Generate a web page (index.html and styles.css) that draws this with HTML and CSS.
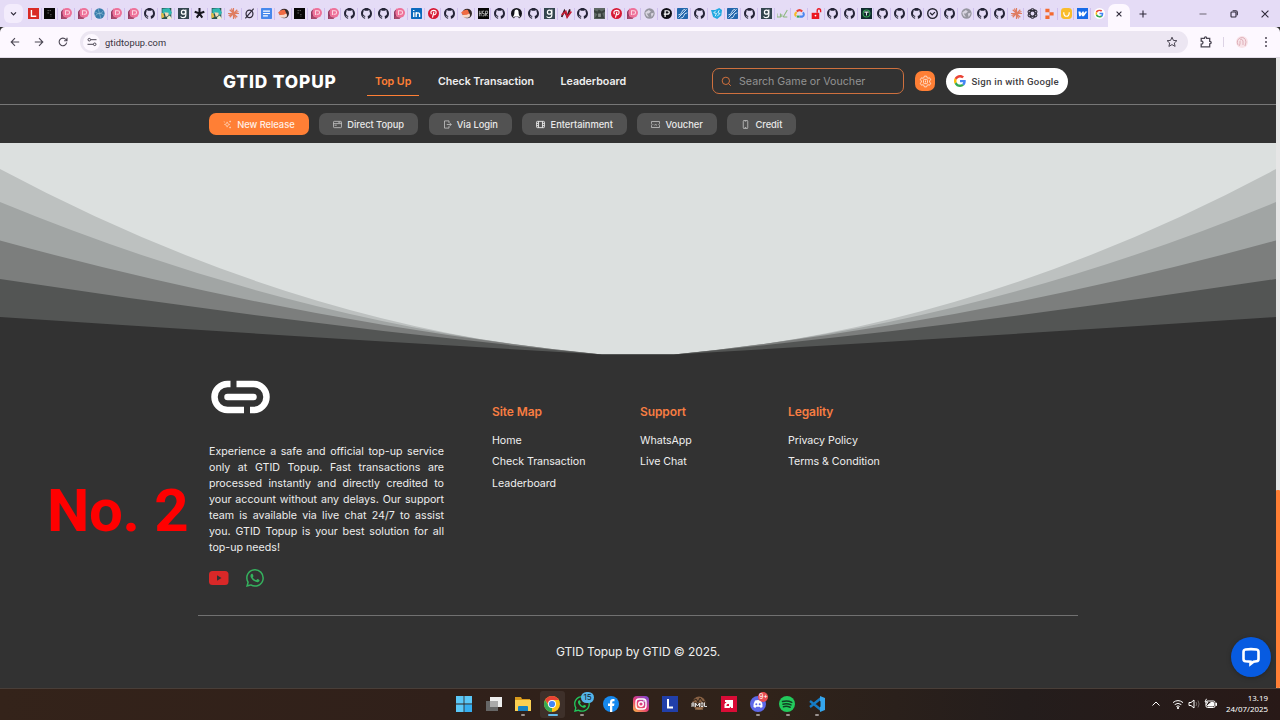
FILE: index.html
```html
<!DOCTYPE html>
<html lang="en">
<head>
<meta charset="utf-8">
<title>GTID Topup</title>
<link rel="stylesheet" href="styles.css">
</head>
<body>
<svg class="defs" aria-hidden="true">
  <symbol id="gh" viewBox="0 0 16 16"><path fill="#252437" d="M8 0C3.58 0 0 3.58 0 8c0 3.54 2.29 6.53 5.47 7.59.4.07.55-.17.55-.38 0-.19-.01-.82-.01-1.49-2.01.37-2.53-.49-2.69-.94-.09-.23-.48-.94-.82-1.13-.28-.15-.68-.52-.01-.53.63-.01 1.08.58 1.23.82.72 1.21 1.87.87 2.33.66.07-.52.28-.87.51-1.07-1.78-.2-3.64-.89-3.64-3.95 0-.87.31-1.59.82-2.15-.08-.2-.36-1.02.08-2.12 0 0 .67-.21 2.2.82.64-.18 1.32-.27 2-.27s1.36.09 2 .27c1.53-1.04 2.2-.82 2.2-.82.44 1.1.16 1.92.08 2.12.51.56.82 1.27.82 2.15 0 3.07-1.87 3.75-3.65 3.95.29.25.54.73.54 1.48 0 1.07-.01 1.93-.01 2.2 0 .21.15.46.55.38A8.01 8.01 0 0 0 16 8c0-4.42-3.58-8-8-8z"/></symbol>
  <symbol id="red-l" viewBox="0 0 16 16"><path fill="#d92b25" d="M0 0h16v16H0z"/><path fill="none" stroke="#fff" stroke-width="2" d="M5 3v9h7"/></symbol>
  <symbol id="dots" viewBox="0 0 16 16"><path fill="#060606" d="M0 0h16v16H0z"/><path stroke="#999" stroke-width="1.3" stroke-dasharray="1.5 2" d="M6 3v5M9 3v3M10 9v4"/></symbol>
  <symbol id="pink" viewBox="0 0 16 16"><path fill="#913b62" d="M0 5l4-4v15H0z"/><path fill="#a9496d" d="M1 12h10l-3 4H1z"/><circle cx="9" cy="7" r="7" fill="#ee7199"/><path fill="#ee7199" d="M3 1h5v11H3z"/><path fill="none" stroke="#fbd6e2" stroke-width="1.500" d="M6.500 10V4h3.500q2.500 0 2.500 2.500T10 9H8"/></symbol>
  <symbol id="planet" viewBox="0 0 16 16"><circle cx="8" cy="8" r="7.5" fill="#397dac"/><path fill="none" stroke="#92bdd5" d="M2 6q6 5 12-2M2 11q6-6 12-1M6 1l4 14"/></symbol>
  <symbol id="anime" viewBox="0 0 16 16"><path fill="#2b534e" d="M1 0h14v16H1z"/><path fill="#31b8b2" d="M2 1l10-1 4 7-3 4-6-5-5 5z"/><path fill="#f2d7ba" d="M5 6l6 1v4l-4 2z"/><path fill="#dfbd46" d="M0 8l3-1 2 6-4 2z"/><path fill="#f1f0d0" d="M9 13l4-2 3 5H9z"/></symbol>
  <symbol id="good" viewBox="0 0 16 16"><path fill="#34464f" d="M0 0h16v16H0z"/><circle cx="8" cy="6" r="3" fill="none" stroke="#fff" stroke-width="1.8"/><path fill="none" stroke="#fff" stroke-width="1.7" d="M11.4 2v8q0 4-4 4-3 0-3.400-2"/></symbol>
  <symbol id="aster" viewBox="0 0 16 16"><path fill="none" stroke="#16151d" stroke-width="3" d="M8 0v8M1 5.500l7 2.500 7-2.500M4 14l4-6 4 6"/></symbol>
  <symbol id="claude" viewBox="0 0 16 16"><path fill="none" stroke="#df7d62" stroke-width="1.700" d="M8 0v16M0 8h16M2.500 2.500l11 11M13.500 2.500l-11 11M5 .8l6 14.400M.8 11l14.400-6"/></symbol>
  <symbol id="oslash" viewBox="0 0 16 16"><ellipse cx="8" cy="8.500" rx="5" ry="5.500" fill="none" stroke="#302b3a" stroke-width="1.8"/><path stroke="#302b3a" stroke-width="1.7" d="M2 15L14 1"/></symbol>
  <symbol id="docs" viewBox="0 0 16 16"><rect width="16" height="16" rx="1" fill="#4688ec"/><path stroke="#fff" stroke-width="1.7" d="M3 4.500h10M3 8h10M3 11.500h7"/></symbol>
  <symbol id="bird" viewBox="0 0 16 16"><circle cx="9" cy="8" r="7" fill="#332a2b"/><path fill="#f06b43" d="M0 7q5-6 10-4l3 7-8 2z"/><path fill="#f6d9cc" d="M1 10q7 1 11-2 3 5-2 6-7 1-9-4z"/></symbol>
  <symbol id="linkedin" viewBox="0 0 16 16"><rect width="16" height="16" rx="1" fill="#0b69bd"/><path fill="none" stroke="#fff" stroke-width="2" d="M4 6v7M4 3v1.500M7.500 13V6m0 4q0-3 2.600-3T12.500 10v3"/></symbol>
  <symbol id="pin" viewBox="0 0 16 16"><circle cx="8" cy="8" r="8" fill="#d71934"/><path fill="none" stroke="#fff" stroke-width="1.7" d="M5 9Q2.500 4 8 3.500 13 3.500 11.500 8 10 11 7.500 9M8.500 6L6.500 14"/></symbol>
  <symbol id="hsr" viewBox="0 0 16 16"><path fill="#050505" d="M0 0h16v16H0z"/><path fill="none" stroke="#ddd" d="M2 4v8M2 8h2.500M4.500 4v8M9 4.500H6.500V8H9v3.500H6.500M11 12V4.500h3V8h-3l3 4"/></symbol>
  <symbol id="oval" viewBox="0 0 16 16"><circle cx="8" cy="8" r="8" fill="#13131b"/><path fill="#fff" d="M5 6q0-4 3-4t3 4q0 3 1 5l2 4q-2-3-6-3t-6 3l2-4Q5 9 5 6z"/><path fill="#e5dcf6" d="M4 16q1-4 4-4t4 4z"/></symbol>
  <symbol id="rn" viewBox="0 0 16 16"><path fill="none" stroke="#341821" stroke-width="2.600" d="M1 13L5 4l4 8 4-10"/><path fill="none" stroke="#c81c34" stroke-width="2.500" d="M1 10l6-5 2 8 6-8"/></symbol>
  <symbol id="photo" viewBox="0 0 16 16"><path fill="#5e6864" d="M0 0h16v16H0z"/><path fill="#39413e" d="M0 3l5 2 2-3 4 3 5-3v3l-4 3 3 7H1l4-6-5-3z"/><path fill="#8b928e" d="M6 8h4v5H6z"/></symbol>
  <symbol id="globe" viewBox="0 0 16 16"><circle cx="8" cy="8" r="7.500" fill="#9696a0"/><path fill="#d9d5e1" d="M2 6l5-3 3 2-3 3H4l3 5q-5-1-5-7zm8 2l4-1q0 4-3 6z"/></symbol>
  <symbol id="pblack" viewBox="0 0 16 16"><circle cx="8" cy="8" r="8" fill="#111018"/><path fill="none" stroke="#fff" stroke-width="1.800" d="M6 13V4h3q3 0 3 2.500T9 9H4"/></symbol>
  <symbol id="waves" viewBox="0 0 16 16"><rect width="16" height="16" rx="1" fill="#2267ac"/><path fill="none" stroke="#dbecfa" stroke-width="1.300" d="M2 14L14 2M2 10q4 0 5-4t5-4M5 15q5-1 5-4t5-4"/></symbol>
  <symbol id="cyan" viewBox="0 0 16 16"><path fill="#21a9e1" d="M0 3l6 0 6-3 4 3-1 8-6 5-6-3z"/><path fill="none" stroke="#e8f8ff" stroke-width="1.300" d="M7 4L4 7l4 1-2 4M12 3l-2 4 3 1-4 4"/></symbol>
  <symbol id="line" viewBox="0 0 16 16"><path fill="none" stroke="#8bb77d" stroke-width="1.500" d="M0 8v5h5V8m2 5V9m2 4l6-10M9 13h6"/></symbol>
  <symbol id="cloud" viewBox="0 0 16 16"><path fill="none" stroke="#4c86ef" stroke-width="3" d="M8 12.500h4q4-2 1-6"/><path fill="none" stroke="#ea4335" stroke-width="3" d="M4 5q4-4 8 0"/><path fill="none" stroke="#f9ba25" stroke-width="3" d="M4 6q-4 3-1 6"/><path stroke="#38a858" stroke-width="3" d="M4 12.500h4"/></symbol>
  <symbol id="lock" viewBox="0 0 16 16"><path fill="#eb1721" d="M1 7h11v9H1z"/><path fill="none" stroke="#eb1721" stroke-width="2" d="M9 7V4q0-3 2.500-3T14 4v2"/><circle cx="6.500" cy="11" r="1.300" fill="#fff"/></symbol>
  <symbol id="tgreen" viewBox="0 0 16 16"><path fill="#102b30" d="M0 0h16v16H0z"/><circle cx="8" cy="8" r="5" fill="none" stroke="#36a956" stroke-width="1.500"/><path stroke="#dfeee7" stroke-width="1.500" d="M5 6h6M8 6v5"/></symbol>
  <symbol id="check" viewBox="0 0 16 16"><circle cx="8" cy="8" r="7" fill="none" stroke="#252431" stroke-width="2"/><path fill="none" stroke="#252431" stroke-width="1.800" d="M4.500 7l3 3 4-4"/></symbol>
  <symbol id="gpt" viewBox="0 0 16 16"><g fill="none" stroke="#2b2934" stroke-width="1.500"><ellipse cx="8" cy="8" rx="3.500" ry="7"/><ellipse cx="8" cy="8" rx="3.500" ry="7" transform="rotate(60 8 8)"/><ellipse cx="8" cy="8" rx="3.500" ry="7" transform="rotate(120 8 8)"/></g></symbol>
  <symbol id="replit" viewBox="0 0 16 16"><path fill="#f4692f" d="M2 1h6v5H2zM8 6h6v5H8zM2 11h6v5H2z"/></symbol>
  <symbol id="yellow" viewBox="0 0 16 16"><rect width="16" height="16" rx="5" fill="#f9bc2b"/><path fill="none" stroke="#fff" stroke-width="1.800" d="M4 6q0 6 4 6t4-6"/></symbol>
  <symbol id="webflow" viewBox="0 0 16 16"><path fill="#176be8" d="M0 0h16v16H0z"/><path fill="#fff" d="M2 5h3l1 3 2-3h2v3l2-3h3l-5 7H7V9l-2 3H3z"/></symbol>
  <symbol id="google" viewBox="0 0 48 48"><path fill="#EA4335" d="M24 9.500c3.540 0 6.710 1.220 9.210 3.600l6.850-6.850C35.900 2.380 30.470 0 24 0 14.620 0 6.510 5.380 2.560 13.220l7.980 6.190C12.430 13.720 17.740 9.500 24 9.500z"/><path fill="#4285F4" d="M46.980 24.550c0-1.570-.15-3.090-.38-4.550H24v9.020h12.940c-.58 2.960-2.260 5.480-4.780 7.180l7.730 6c4.510-4.180 7.090-10.360 7.090-17.650z"/><path fill="#FBBC05" d="M10.530 28.590c-.48-1.450-.76-2.990-.76-4.590s.27-3.140.76-4.590l-7.980-6.190C.92 16.460 0 20.120 0 24s.92 7.540 2.560 10.780l7.970-6.190z"/><path fill="#34A853" d="M24 48c6.480 0 11.930-2.130 15.890-5.810l-7.730-6c-2.150 1.450-4.920 2.300-8.160 2.300-6.260 0-11.570-4.220-13.470-9.910l-7.980 6.190C6.510 42.620 14.620 48 24 48z"/></symbol>
  <symbol id="gtab" viewBox="0 0 16 16"><circle cx="8" cy="8" r="8" fill="#fff"/><use href="#google" x="2" y="2" width="12" height="12"/></symbol>
  <symbol id="wa" viewBox="0 0 16 16"><path fill="currentColor" d="M13.601 2.326A7.854 7.854 0 0 0 7.994 0C3.627 0 .068 3.558.064 7.926c0 1.399.366 2.760 1.057 3.965L0 16l4.204-1.102a7.933 7.933 0 0 0 3.790.965h.004c4.368 0 7.926-3.558 7.930-7.930A7.898 7.898 0 0 0 13.600 2.326zM7.994 14.521a6.573 6.573 0 0 1-3.356-.920l-.240-.144-2.494.654.666-2.433-.156-.251a6.560 6.560 0 0 1-1.007-3.505c0-3.626 2.957-6.584 6.591-6.584a6.560 6.560 0 0 1 4.660 1.931 6.557 6.557 0 0 1 1.928 4.660c-.004 3.639-2.961 6.592-6.592 6.592zm3.615-4.934c-.197-.099-1.170-.578-1.353-.646-.182-.065-.315-.099-.445.099-.133.197-.513.646-.627.775-.114.133-.232.148-.430.050-.197-.100-.836-.308-1.592-.985-.590-.525-.985-1.175-1.103-1.372-.114-.198-.011-.304.088-.403.087-.088.197-.232.296-.346.100-.114.133-.198.198-.330.065-.134.034-.248-.015-.347-.050-.099-.445-1.076-.612-1.470-.160-.389-.323-.335-.445-.340-.114-.007-.247-.007-.380-.007a.729.729 0 0 0-.529.247c-.182.198-.691.677-.691 1.654 0 .977.710 1.916.810 2.049.098.133 1.394 2.132 3.383 2.992.470.205.840.326 1.129.418.475.152.904.129 1.246.080.380-.058 1.171-.480 1.338-.943.164-.464.164-.860.114-.943-.049-.084-.182-.133-.380-.232z"/></symbol>
</svg>

<div class="tabstrip">
  <div class="tab-search"><svg viewBox="0 0 8 8"><path d="M1.800 3L4 5.200 6.200 3"/></svg></div>
  <div class="tabs" id="tabs"></div>
  <div class="active-tab"><svg viewBox="0 0 8 8"><path d="M1.600 1.600l4.800 4.800M6.400 1.600L1.600 6.400"/></svg></div>
  <svg class="new-tab" viewBox="0 0 8 8"><path d="M4 .5v7M.5 4h7"/></svg>
  <div class="window-buttons">
    <svg viewBox="0 0 8 8"><path d="M.5 4h7"/></svg>
    <svg viewBox="0 0 8 8"><rect x="1" y="2" width="5" height="5" rx=".8"/><path d="M2.600.8h3.200q1.500 0 1.500 1.500v3"/></svg>
    <svg viewBox="0 0 8 8"><path d="M.6.6l6.800 6.800M7.400.6L.6 7.400"/></svg>
  </div>
</div>
<div class="toolbar">
  <svg class="nav-icon" viewBox="0 0 10 10"><path d="M9.200 5H1.200M5 1.200L1.200 5 5 8.800"/></svg>
  <svg class="nav-icon" viewBox="0 0 10 10"><path d="M.8 5h8M5 1.200L8.800 5 5 8.800"/></svg>
  <svg class="nav-icon" viewBox="0 0 10 10"><path d="M8.700 5.500A3.800 3.800 0 1 1 7.900 2.500L9 3.600M9 .8v2.900H6.100"/></svg>
  <div class="address">
    <span class="site-info"><svg viewBox="0 0 10 10"><path d="M3.800 2.700H9.500M.5 7.300h5.700"/><circle cx="2.300" cy="2.700" r="1.300"/><circle cx="7.700" cy="7.300" r="1.300"/></svg></span>
    <span class="url">gtidtopup.com</span>
    <svg class="star" viewBox="0 0 12 12"><path d="M6 1.200l1.400 3.200 3.500.3-2.600 2.300.8 3.400L6 8.600l-3.100 1.800.8-3.400L1.100 4.700l3.500-.3z"/></svg>
  </div>
  <svg class="puzzle" viewBox="0 0 12 12"><path d="M1.200 2.300h3.300q0-1.500 1.100-1.500t1.100 1.500h3v3.100q1.500 0 1.500 1.200T9.700 7.800v3.100H1.200V8.200Q3 8.200 3 6.600T1.200 5z"/></svg>
  <span class="divider"></span>
  <svg class="avatar" viewBox="0 0 12 12"><circle cx="6" cy="6" r="6" fill="#f8e3e8"/><path fill="none" stroke="#d8a2ad" stroke-width=".8" d="M2 9Q0 4 4 2q5-2 6 4l-1 4M4 4q2-2 3 1v4M4 5v3l-1 2"/></svg>
  <svg class="kebab" viewBox="0 0 4 12"><circle cx="2" cy="2" r="1"/><circle cx="2" cy="6" r="1"/><circle cx="2" cy="10" r="1"/></svg>
</div>

<main class="viewport">
  <div class="site">
    <header class="header">
      <div class="brand">GTID TOPUP</div>
      <nav class="menu"><a class="current">Top Up</a><a>Check Transaction</a><a>Leaderboard</a></nav>
      <div class="search"><svg viewBox="0 0 12 12"><circle cx="5.300" cy="5.300" r="4"/><path d="M8.300 8.300l2.400 2.400"/></svg><span>Search Game or Voucher</span></div>
      <div class="settings"><svg viewBox="0 0 14 14"><path d="M5.800 1.200h2.400l.5 1.700 1 .6 1.700-.5 1.200 2.100L11.400 6.400v1.200l1.200 1.300-1.200 2.100-1.700-.5-1 .6-.5 1.700H5.800l-.5-1.700-1-.6-1.700.5-1.200-2.100 1.200-1.300V6.400L1.400 5.100 2.600 3l1.700.5 1-.6z"/><rect x="4.900" y="4.700" width="4.200" height="4.600" rx="1"/><path d="M7 6v2"/></svg></div>
      <div class="signin"><svg><use href="#google"/></svg><span>Sign in with Google</span></div>
    </header>
    <div class="categories">
      <div class="chip hot"><svg viewBox="0 0 12 12"><path d="M5.500 2.500l1 2.500L9 6 6.500 7l-1 2.500-1-2.500L2 6l2.500-1zM9.500.8v2.400M8.300 2h2.400M9.500 8.800v2.400M8.300 10h2.400M1 2l1.500 1"/></svg>New Release</div>
      <div class="chip"><svg viewBox="0 0 12 12"><rect x=".7" y="1.800" width="10.600" height="8.400" rx="1"/><path d="M.7 4.800h10.600M7 3h3M2 7h3"/></svg>Direct Topup</div>
      <div class="chip login"><svg viewBox="0 0 12 12"><path d="M8 4V1.200H2v9.600h6V8M5 6h6M9 4l2 2-2 2"/></svg>Via Login</div>
      <div class="chip film"><svg viewBox="0 0 12 12"><rect x=".8" y="1.800" width="10.400" height="8.400" rx="1"/><path d="M3.400 1.800v8.400M8.600 1.800v8.400M1 4.500h2.400M1 7.500h2.400M8.600 4.500H11M8.600 7.500H11"/></svg>Entertainment</div>
      <div class="chip"><svg viewBox="0 0 12 12"><path d="M.7 2h10.600v2.800q-1.500 1.200 0 2.400V10H.7V7.200q1.500-1.200 0-2.400zM4 6l1 1 1-1 2 1"/></svg>Voucher</div>
      <div class="chip"><svg viewBox="0 0 12 12"><rect x="3" y=".6" width="6" height="10.800" rx="1"/><path d="M5 1.500h2M5 10h2"/></svg>Credit</div>
    </div>
    <svg class="curves" viewBox="0 0 1276 212" preserveAspectRatio="none">
      <path fill="#dce0df" d="M0 0h1276v212H0z"/>
      <path fill="#bdc1c0" d="M0 26Q302 187 602 211.500H674Q974 187 1276 26V212H0z"/>
      <path fill="#a1a5a4" d="M0 59Q301 183 602 211.500H674Q975 183 1276 59V212H0z"/>
      <path fill="#7c7e7d" d="M0 97.500Q301 180 602 211.500H674Q975 180 1276 97.500V212H0z"/>
      <path fill="#535554" d="M0 136Q301 182 602 211.500H674Q975 182 1276 136V212H0z"/>
      <path fill="#323232" d="M0 174Q301 194 602 211.500H674Q975 194 1276 174V212H0z"/>
    </svg>
    <footer class="footer">
      <div class="columns">
        <section class="about">
          <svg class="chain" viewBox="0 0 60 34"><path fill="none" stroke="#fff" stroke-width="6.500" d="M19.500 4H16.500A13 13 0 0 0 16.500 30H33M25.500 4H42.500A13 13 0 0 1 42.500 30H39"/><path stroke="#fff" stroke-width="6.500" stroke-linecap="round" d="M16.500 17h26"/></svg>
          <p>Experience a safe and official top-up service only at GTID Topup. Fast transactions are processed instantly and directly credited to your account without any delays. Our support team is available via live chat 24/7 to assist you. GTID Topup is your best solution for all top-up needs!</p>
          <div class="social">
            <svg class="youtube" viewBox="0 0 20 14"><rect width="19.500" height="14" rx="3.500" fill="#d92828"/><path fill="#323232" d="M8 4.300v5.400l4.500-2.700z"/></svg>
            <svg class="whatsapp"><use href="#wa"/></svg>
          </div>
        </section>
        <section class="links"><h3>Site Map</h3><a>Home</a><a>Check Transaction</a><a>Leaderboard</a></section>
        <section class="links"><h3>Support</h3><a>WhatsApp</a><a>Live Chat</a></section>
        <section class="links"><h3>Legality</h3><a>Privacy Policy</a><a>Terms &amp; Condition</a></section>
      </div>
      <div class="copyright">GTID Topup by GTID © 2025.</div>
    </footer>
    <div class="mark">No. 2</div>
    <div class="chat"><svg viewBox="0 0 20 20"><path d="M4.500 2.500q5.500-.8 11 0 2 .3 2 2.500v7q0 2-2 2.300l-3 .4L9.500 17v-2.200l-5-.5q-2-.3-2-2.300V5q0-2.200 2-2.500z"/></svg></div>
  </div>
  <div class="scrollbar"><div class="thumb"></div></div>
</main>

<div class="taskbar">
  <div class="apps">
    <div class="app"><svg viewBox="0 0 16 16"><path fill="#5bc8f8" d="M0 0h7.600v7.600H0zM8.400 0H16v7.600H8.400zM0 8.400h7.600V16H0z"/><path fill="#35aef0" d="M8.400 8.400H16V16H8.400z"/></svg></div>
    <div class="app"><svg viewBox="0 0 16 16"><path fill="#eee" d="M4 1h12v10H4z"/><path fill="#666" d="M0 5h12v10H0z"/><path fill="#aaa" d="M4 5h8v6H4z"/></svg></div>
    <div class="app open"><svg viewBox="0 0 16 16"><path fill="#d99a1c" d="M0 1h6l1 2h8v5H0z"/><path fill="#fbd052" d="M0 4h16v11H0z"/><path fill="#1684c5" d="M3 15v-4q0-1 1-1h8q1 0 1 1v4z"/></svg></div>
    <div class="app focused"><svg viewBox="0 0 16 16"><circle cx="8" cy="8" r="8" fill="#fbc216"/><path fill="#e94235" d="M1.100 4A8 8 0 0 1 14.900 4H8L5 9z"/><path fill="#34a853" d="M1.100 4l3.500 6L8 12v4A8 8 0 0 1 1.100 4z"/><circle cx="8" cy="8" r="4" fill="#fff"/><circle cx="8" cy="8" r="3.100" fill="#4285f4"/></svg></div>
    <div class="app open wa"><svg><use href="#wa"/></svg><span class="badge">15</span></div>
    <div class="app"><svg viewBox="0 0 16 16"><circle cx="8" cy="8" r="8" fill="#1688ed"/><path fill="#fff" d="M7 16v-6H5V7.500h2V6q0-3 3-3h1.500v2.300H10Q9.300 5.300 9.300 6v1.500h2.200L11 10H9.300v6z"/></svg></div>
    <div class="app"><svg viewBox="0 0 16 16"><defs><linearGradient id="ig" x1="0" y1="1" x2=".8" y2="0"><stop stop-color="#fcbb45"/><stop offset=".5" stop-color="#e63c72"/><stop offset="1" stop-color="#8646cc"/></linearGradient></defs><rect width="16" height="16" rx="4" fill="url(#ig)"/><rect x="3" y="3" width="10" height="10" rx="3" fill="none" stroke="#fff" stroke-width="1.400"/><circle cx="8" cy="8" r="2.300" fill="none" stroke="#fff" stroke-width="1.400"/><circle cx="11" cy="5" r=".8" fill="#fff"/></svg></div>
    <div class="app"><svg viewBox="0 0 16 16"><path fill="#213fa9" d="M0 0h16v16H0z"/><path fill="none" stroke="#fff" stroke-width="2" d="M6 3v8.500h5"/></svg></div>
    <div class="app"><svg viewBox="0 0 16 16"><circle cx="8" cy="7" r="6.500" fill="#876043"/><path fill="none" stroke="#302319" d="M2 5l3-2 2 3 2-4 3 4 2-1"/><path fill="#3a2b20" d="M0 6.500h16V11H0z"/><path fill="none" stroke="#eee" stroke-width=".9" d="M1 11V7h2v4M1 9h2M4.500 11V7l2 3 2-3v4M10 7h2v3.500h-2zM13.500 6.500V10.500H16"/><path stroke="#b88a60" d="M4 13h8"/></svg></div>
    <div class="app"><svg viewBox="0 0 16 16"><path fill="#d90c36" d="M0 0h16v16H0z"/><path fill="none" stroke="#fff" stroke-width="2" d="M4 5h7v7M9 7H6L4.500 8.500V11H8l1-1z"/></svg></div>
    <div class="app open discord"><svg viewBox="0 0 16 16"><circle cx="8" cy="8" r="8" fill="#5d68e8"/><path fill="#fff" d="M5 4.500q3-1 6 0Q13 8 12.500 11q-1 1-2 .8l-.8-1H6.300l-.8 1q-1 .2-2-.8Q3 8 5 4.500z"/><circle cx="6.300" cy="8.300" r="1" fill="#5d68e8"/><circle cx="9.700" cy="8.300" r="1" fill="#5d68e8"/></svg><span class="badge red">9+</span></div>
    <div class="app open"><svg viewBox="0 0 16 16"><circle cx="8" cy="8" r="8" fill="#23ca5c"/><path fill="none" stroke="#123d23" stroke-linecap="round" stroke-width="1.500" d="M3.500 5.500q5-1.500 9.300.8M4 8.200q4-1.200 8 .7M4.500 10.700q3.500-.9 6.600.6"/></svg></div>
    <div class="app open"><svg viewBox="0 0 16 16"><path fill="none" stroke="#167cc5" stroke-width="2.300" d="M1 5l10.500 8.500M1 11L11.500 2.500"/><path fill="#35a6ed" d="M11 0l5 2v12l-5 2z"/><path fill="#241d1a" d="M11.500 5v6L8 8z"/></svg></div>
  </div>
  <div class="tray">
    <svg class="caret" viewBox="0 0 10 10"><path d="M1.500 6.500L5 3l3.500 3.500"/></svg>
    <svg class="wifi" viewBox="0 0 12 12"><path d="M1 4.600q5-4 10 0M2.700 6.600q3.300-2.700 6.600 0M4.400 8.500q1.600-1.300 3.200 0"/><circle cx="6" cy="10" r=".7" fill="#fff"/></svg>
    <svg class="sound" viewBox="0 0 12 12"><path d="M1 4.500h2L6 2v8L3 7.500H1z"/><path opacity=".35" d="M8 4q1.500 2 0 4M10 2.500q2.200 3.500 0 7"/></svg>
    <svg class="battery" viewBox="0 0 13 12"><rect x="2" y="3" width="9" height="6.500" rx="1.500"/><path fill="#fff" d="M3.500 7.500L7 4.500h2.500V8H3.500zM12 5v2.500h.5V5z"/><path d="M2.500.8L1 4h3L2 7"/></svg>
    <div class="clock"><span>13.19</span><span>24/07/2025</span></div>
  </div>
</div>
<script src="tabs.js"></script>
</body>
</html>
```
FILE: styles.css
```css
* { box-sizing: border-box; }
body { margin: 0; width: 1280px; height: 720px; overflow: hidden; display: flex; flex-direction: column; font-family: Inter, "Liberation Sans", sans-serif; background: #323232; }
svg { display: block; flex: none; }
.defs { position: absolute; width: 0; height: 0; }

.tabstrip { height: 27px; flex: none; display: flex; align-items: center; background: #e5dcf6; }
.tab-search { width: 19px; height: 19px; margin: 0 2px 0 4px; border-radius: 6px; background: #f3ecfc; display: grid; place-items: center; }
.tab-search svg { width: 9px; height: 9px; }
.tab-search svg, .active-tab svg, .new-tab, .window-buttons svg { fill: none; stroke: #2e2939; stroke-width: 1.1; }
.tabs { width: 1083px; display: flex; }
.tab { width: 16.66px; height: 12px; flex: none; display: flex; align-items: center; justify-content: center; border-right: 1px solid #cfc0ef; }
.tab:last-child { border: 0; }
.tab svg { width: 11px; height: 11px; margin-left: 1px; }
.active-tab { width: 22px; height: 23px; align-self: flex-end; border-radius: 7px 7px 0 0; background: #fdf8ff; display: grid; place-items: center; padding-bottom: 4px; }
.active-tab svg { width: 8px; height: 8px; }
.new-tab { width: 8px; height: 8px; margin-left: 9px; }
.window-buttons { display: flex; gap: 23px; margin-left: 52px; }
.window-buttons svg { width: 8px; height: 8px; }
.window-buttons svg:first-child { stroke: #77717f; }

.toolbar { height: 31px; flex: none; display: flex; align-items: center; padding: 0 10px; background: #fdf8ff; border-bottom: 1px solid #e2dce7; border-radius: 5px 5px 0 0; }
.nav-icon { width: 10px; height: 10px; margin-right: 14px; fill: none; stroke: #4b4653; stroke-width: 1.1; }
.address { width: 1108px; height: 22px; margin-left: -2px; border-radius: 11px; background: #ece6f2; display: flex; align-items: center; padding-left: 3px; }
.site-info { width: 17px; height: 17px; border-radius: 50%; background: #fdf8ff; display: grid; place-items: center; }
.site-info svg { width: 10px; height: 10px; fill: none; stroke: #4b4653; }
.url { margin-left: 5px; flex: 1; font: 9.300px Roboto, sans-serif; letter-spacing: .06px; color: #37323f; }
.star { width: 12px; height: 12px; margin-right: 10px; fill: none; stroke: #4b4653; }
.puzzle { width: 12px; height: 12px; margin-left: 12px; fill: none; stroke: #4b4653; stroke-width: 1.300; }
.divider { width: 1px; height: 10px; margin: 0 12px 0 11px; background: #ddd3e5; }
.avatar { width: 12px; height: 12px; }
.kebab { width: 4px; height: 12px; margin-left: 16px; fill: #4b4653; }

.viewport { height: 630px; flex: none; display: flex; }
.site { width: 1276px; position: relative; color: #eee; }
.header { height: 47px; display: flex; align-items: center; padding-left: 223px; border-bottom: 1px solid #777; }
.brand { width: 144px; padding-top: 1px; font: 800 17.300px Inter, sans-serif; letter-spacing: .88px; color: #fff; white-space: nowrap; }
.menu { width: 345px; display: flex; gap: 10.700px; font-size: 10.670px; font-weight: 600; letter-spacing: -.04px; }
.menu a { height: 30px; line-height: 31px; padding: 0 8px; white-space: nowrap; }
.menu .current { color: #ff7f35; border-bottom: 1px solid #ff7f35; }
.search { width: 192px; height: 26px; display: flex; align-items: center; gap: 7px; padding-left: 8px; border: 1px solid #ce703e; border-radius: 7px; color: #929292; font-size: 10.670px; letter-spacing: 0; }
.search span { padding-top: 1px; }
.search svg { width: 11px; height: 11px; fill: none; stroke: #df763d; }
.settings { width: 20px; height: 20px; margin-left: 11px; border-radius: 7px; background: #ff7f35; display: grid; place-items: center; }
.settings svg { width: 13px; height: 13px; fill: none; stroke: #ffe1d0; }
.signin { width: 122px; height: 27px; margin-left: 11px; padding-left: 8px; border-radius: 14px; background: #fff; display: flex; align-items: center; gap: 5.500px; color: #3f4043; font: 500 9.600px Roboto, sans-serif; letter-spacing: .26px; white-space: nowrap; }
.signin svg { width: 12px; height: 12px; }
.categories { height: 38px; display: flex; align-items: center; gap: 10.500px; padding-left: 209px; }
.chip { height: 22px; padding: 0 14px; display: flex; align-items: center; gap: 5.200px; border-radius: 7px; background: #525252; color: #e9e9e9; font-size: 9.330px; font-weight: 500; letter-spacing: -.03px; white-space: nowrap; }
.chip svg { width: 9px; height: 9px; fill: none; stroke: #ccc; stroke-width: 1; }
.film svg { stroke: #eee; stroke-width: 1.2; }
.hot { background: #ff7f35; color: #fff0e6; }
.hot svg { stroke: #ffd2b6; }
.curves { width: 1276px; height: 212px; }

.footer { height: 333px; padding-left: 198px; }
.columns { width: 880px; height: 261px; display: flex; padding-left: 11px; border-bottom: 1px solid #717171; }
.about { width: 283px; padding-top: 25px; }
.chain { width: 60px; height: 34px; margin-left: 2px; }
.about p { width: 235px; margin: 30px 0 13px; font-size: 10.670px; line-height: 16px; text-align: justify; color: #ededed; }
.social { height: 18px; display: flex; align-items: center; gap: 17px; }
.youtube { width: 20px; height: 14px; }
.whatsapp { width: 18px; height: 18px; color: #35b15e; }
.links { width: 148px; padding-top: 48px; display: flex; flex-direction: column; font-size: 10.670px; letter-spacing: -.05px; }
.links h3 { margin: 0 0 12.100px; color: #f77d42; font-size: 12px; font-weight: 600; line-height: 18px; letter-spacing: -.1px; }
.links a { line-height: 16px; margin-bottom: 5.330px; white-space: nowrap; }
.copyright { width: 880px; padding-top: 27px; line-height: 18px; font-size: 12px; letter-spacing: -.09px; text-align: center; }
.mark { position: absolute; left: 47px; top: 416px; font: 700 60px/74px Roboto, sans-serif; letter-spacing: -.3px; color: #f00; white-space: nowrap; }
.chat { position: absolute; right: 5px; bottom: 11px; width: 40px; height: 40px; border-radius: 50%; background: #075be1; display: grid; place-items: center; box-shadow: 0 1px 5px #0004; }
.chat svg { width: 20px; height: 20px; fill: none; stroke: #fff; stroke-width: 2.600; }
.scrollbar { width: 4px; display: flex; flex-direction: column; justify-content: flex-end; background: #e6e6e6; }
.thumb { height: 198px; background: #ff7f35; border-radius: 1px; }

.taskbar { height: 32px; flex: none; display: flex; justify-content: space-between; padding-left: 449.500px; background: linear-gradient(90deg, #34231a, #30201a 35%, #30231a 60%, #241d1c 80%, #281917); border-top: 1px solid #493e38; }
.apps { display: flex; }
.app { width: 29.400px; height: 31px; position: relative; display: grid; place-items: center; padding-bottom: 1px; }
.app svg { width: 16px; height: 16px; }
.app::after { content: ""; position: absolute; bottom: 4px; left: 13px; width: 4px; height: 2px; border-radius: 1px; }
.open::after { background: #9b9390; }
.focused::before { content: ""; position: absolute; inset: 2px 2px 2px; border-radius: 3px; background: #ffffff12; }
.focused::after { width: 10px; left: 10px; background: #65bced; }
.focused svg { position: relative; }
.wa { color: #22c65b; }
.badge { position: absolute; left: 14px; top: 3px; width: 13px; height: 11px; border-radius: 6px; background: #54b4e9; color: #142530; font-size: 8px; line-height: 11px; text-align: center; }
.red { left: 15px; width: 10px; height: 10px; line-height: 10px; background: #e84d52; color: #fff; font-size: 7px; }
.tray { display: flex; align-items: center; padding: 0 12px 2px 0; }
.tray svg { fill: none; stroke: #fff; stroke-width: 1; }
.caret { width: 10px; height: 10px; margin-right: 11px; }
.wifi { width: 12px; height: 12px; margin-right: 4px; }
.sound { width: 12px; height: 12px; margin-right: 4px; }
.battery { width: 13px; height: 12px; margin-right: 9px; }
.clock { width: 42px; display: flex; flex-direction: column; align-items: flex-end; color: #fff; font: 7.900px/10.500px "Noto Sans", sans-serif; white-space: nowrap; }
```
FILE: tabs.js
```js
const favicons = (
  'red-l dots pink pink planet pink pink gh anime good aster anime claude oslash docs bird dots pink pink ' +
  'gh gh gh pink linkedin pin gh bird hsr gh oval gh good rn gh photo pin pink globe ' +
  'pblack waves gh cyan waves gh good line cloud lock gh gh tgreen gh gh gh check gh globe ' +
  'gh gh claude gpt replit yellow webflow gtab'
).split(' ');

document.getElementById('tabs').innerHTML = favicons
  .map(name => `<div class="tab"><svg><use href="#${name}"/></svg></div>`)
  .join('');
```
